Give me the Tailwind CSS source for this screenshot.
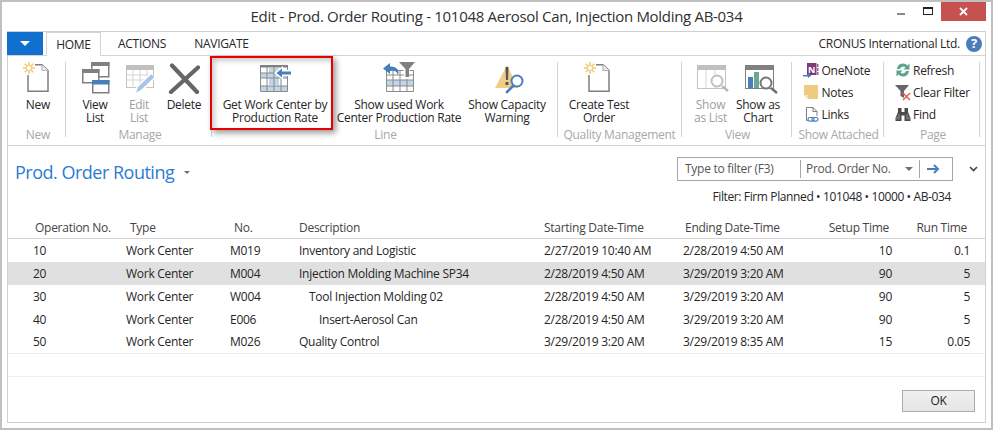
<!DOCTYPE html>
<html lang="en">
<head>
<meta charset="UTF-8">
<title>Edit - Prod. Order Routing</title>
<script src="https://cdn.jsdelivr.net/npm/@tailwindcss/browser@4"></script>
</head>
<body class="bg-white">
<svg class="hidden" width="0" height="0">
  <symbol id="new-doc" viewBox="0 0 32 32">
    <path d="M6 13V29.25H26V8.5L20 2.75H13" fill="none" stroke="#7f7f7f" stroke-width="1.5"/>
    <path d="M20 2.75V8.5H26" fill="#eee" stroke="#b5b5b5" stroke-width="1.2"/>
    <path d="M7 0V12M1 6H13M2.7 1.7L11.3 10.3M11.3 1.7L2.7 10.3" stroke="#f4c875" stroke-width="1.6"/>
    <circle cx="7" cy="6" r="2.6" fill="#fff" stroke="#f4c875"/>
  </symbol>
</svg>
<div class="w-[993px] h-[430px] overflow-hidden font-['Open_Sans',sans-serif] text-[12px] tracking-[-0.27px] text-[#262626] flex flex-col border-2 border-[#c0c0c0] bg-white">
  <!-- title bar -->
  <div class="h-[29px] relative flex items-center justify-center text-[15px] tracking-[-0.3px] text-[#303030] shrink-0">
    <span>Edit - Prod. Order Routing - 101048 Aerosol Can, Injection Molding AB-034</span>
    <div class="absolute right-[5px] top-0 flex items-start">
      <div class="w-[8px] h-[2px] bg-[#8a8a8a] mt-[11px] mr-[18px]"></div>
      <div class="w-[10px] h-[8px] border border-t-2 border-[#222] mt-[5px] mr-[8px]"></div>
      <div class="w-[45px] h-[19px] bg-[#c75050] flex items-center justify-center">
        <svg width="9" height="9" viewBox="0 0 9 9"><path d="M1 1L8 8M8 1L1 8" stroke="#fff" stroke-width="1.8"/></svg>
      </div>
    </div>
  </div>

  <div class="flex-1 mx-[5px] mb-[5px] border border-[#d0d0d0] flex flex-col">
    <!-- tabs -->
    <div class="h-[24px] shrink-0 border-b border-[#d4d4d4] flex items-end relative">
      <div class="w-[36px] h-[23px] bg-[#1170cd] flex items-center justify-center self-start -ml-px">
        <div class="w-0 h-0 border-x-[5px] border-x-transparent border-t-[5px] border-t-white"></div>
      </div>
      <div class="ml-[3px] w-[55px] h-[24px] -mb-px pt-px bg-white border border-b-0 border-[#d4d4d4] flex items-center justify-center">HOME</div>
      <div class="ml-[17px] h-[23px] pt-px flex items-center">ACTIONS</div>
      <div class="ml-[28px] h-[23px] pt-px flex items-center">NAVIGATE</div>
      <div class="ml-auto h-[23px] flex items-center mr-[3px] gap-[6px]">
        <span class="pt-px">CRONUS International Ltd.</span>
        <div class="w-[16px] h-[16px] rounded-full bg-[#4a7ebb] text-white text-[13px] font-bold flex items-center justify-center">?</div>
      </div>
    </div>

    <!-- ribbon -->
    <div class="h-[90px] shrink-0 border-b border-[#d4d4d4] flex items-start leading-[13px] text-center">
      <!-- New -->
      <div class="mt-[6px] w-[58px] h-[75px] border-r border-[#d4d4d4] flex flex-col">
        <div class="h-[66px] shrink-0 pl-[3px]">
          <div class="w-[54px] flex flex-col items-center">
            <svg class="w-[32px] h-[32px] mb-[4px]"><use href="#new-doc"/></svg>
            <span>New</span>
          </div>
        </div>
        <div class="h-[14px] shrink-0 text-[#a8a8a8] pl-[3px]">New</div>
      </div>
      <!-- Manage -->
      <div class="mt-[6px] w-[146px] h-[75px] border-r border-[#d4d4d4] flex flex-col">
        <div class="h-[66px] shrink-0 pl-[7px] flex items-start">
          <div class="w-[44px] flex flex-col items-center">
            <svg class="w-[32px] h-[32px] mb-[4px]" viewBox="0 0 32 32">
              <rect x="12.75" y="0.75" width="17" height="14" fill="#fff" stroke="#808080" stroke-width="1.5"/><rect x="12" y="0" width="18.5" height="4" fill="#808080"/>
              <rect x="3.75" y="7.75" width="16" height="13" fill="#fff" stroke="#808080" stroke-width="1.5"/><rect x="3" y="7" width="17.5" height="4" fill="#808080"/>
              <rect x="13.75" y="18.75" width="16" height="12" fill="#fff" stroke="#808080" stroke-width="1.5"/><rect x="13" y="18" width="17.5" height="4.5" fill="#4a7ebb"/>
            </svg>
            <span>View<br>List</span>
          </div>
          <div class="w-[44px] flex flex-col items-center text-[#a0a0a0]">
            <svg class="w-[32px] h-[32px] mb-[4px]" viewBox="0 0 32 32">
              <rect x="3.5" y="3.5" width="27" height="22" fill="#fff" stroke="#c4c4c4"/><rect x="3" y="3" width="28" height="5" fill="#c0c0c0"/>
              <path d="M3 13H31M3 18H31M10 8V26M17 8V26M24 8V26" stroke="#d4d4d4"/>
              <path d="M14 30L29 14" stroke="#fff" stroke-width="7"/>
              <path d="M13 30.500L15 25L28 12.500L31 15.500L18 28Z" fill="#a8c4e4"/>
            </svg>
            <span>Edit<br>List</span>
          </div>
          <div class="w-[46px] flex flex-col items-center">
            <svg class="w-[32px] h-[32px] mb-[4px]" viewBox="0 0 32 32">
              <path d="M4 3.500L29 30M30 5.500L3 30" stroke="#666" stroke-width="4.2" stroke-linecap="round"/>
            </svg>
            <span>Delete</span>
          </div>
        </div>
        <div class="h-[14px] shrink-0 text-[#a8a8a8] pl-[3px]">Manage</div>
      </div>
      <!-- Line -->
      <div class="mt-[6px] w-[346px] h-[75px] border-r border-[#d4d4d4] flex flex-col relative">
        <div class="h-[66px] shrink-0 pl-[8px] flex items-start relative">
          <div class="w-[110px] flex flex-col items-center">
            <svg class="w-[34px] h-[32px] mb-[4px]" viewBox="0 0 34 32">
              <rect x="2" y="4" width="28" height="25" fill="#fff"/>
              <path d="M2 11H30V16H2ZM2 24H30V29H2Z" fill="#c0d4ea"/><rect x="11" y="6" width="10" height="17" fill="#c0d4ea"/>
              <path d="M2.500 3.500H29.500V29.500H2.500ZM2 11H30M2 16H30M2 24H30M9 5V29M16 5V29M23 5V29" fill="none" stroke="#8a8a8a"/>
              <path d="M2 3H30V5.500H2Z" fill="#808080"/>
              <path d="M33 8H25V4L16 11L25 18V14H33Z" fill="#fff"/>
              <path d="M33 9.500H24V6.500L18.500 11L24 15.500V12.500H33Z" fill="#4a7ebb"/>
            </svg>
            <span>Get Work Center by<br>Production Rate</span>
          </div>
          <div class="ml-[5px] w-[128px] flex flex-col items-center">
            <svg class="w-[34px] h-[32px] mb-[4px]" viewBox="0 0 34 32">
              <rect x="4" y="8" width="28" height="21" fill="#fff"/><rect x="4" y="18" width="28" height="6" fill="#c0d4ea"/>
              <path d="M4.500 8.500H31.500V29.500H4.500ZM4 13H32M4 18H32M4 24H32M11 9V29M18 9V29M25 9V29" fill="none" stroke="#8a8a8a"/>
              <path d="M15 0H34V2L27 9V17H22V9L15 2Z" fill="#fff"/>
              <path d="M17 0H33L27 7V15L23.500 15V7Z" fill="#808080"/>
              <path d="M8 1L1 6.500L8 12V8.500C12 8 15 9 16 13C18 8 14 4 8 4.500Z" fill="#4a7ebb"/>
            </svg>
            <span>Show used Work<br>Center Production Rate</span>
          </div>
          <div class="w-[88px] flex flex-col items-center">
            <svg class="w-[40px] h-[32px] mb-[4px]" viewBox="0 0 40 32">
              <path d="M8 26L20 3L31 26Z" fill="#f0cd88"/>
              <path d="M18.500 5H21.500L21 18H19Z" fill="#555"/><rect x="18.500" y="20" width="3" height="3" fill="#555"/>
              <path d="M26 24L20 30" stroke="#4a7ebb" stroke-width="2.6" stroke-linecap="round"/>
              <circle cx="30" cy="19" r="5.500" fill="#fff" stroke="#4a7ebb" stroke-width="2"/>
            </svg>
            <span>Show Capacity<br>Warning</span>
          </div>
        </div>
        <div class="h-[14px] shrink-0 text-[#a8a8a8] pl-[2px]">Line</div>
        <!-- red callout drawn over the screenshot -->
        <div class="absolute left-[-2px] top-[-6px] w-[123px] h-[74px] border-2 border-[#e60000] shadow-[3px_3px_6px_rgba(0,0,0,0.4),inset_3px_3px_5px_rgba(0,0,0,0.2)]"></div>
      </div>
      <!-- Quality Management -->
      <div class="mt-[6px] w-[124px] h-[75px] border-r border-[#d4d4d4] flex flex-col">
        <div class="h-[66px] shrink-0 pl-[2px]">
          <div class="w-[78px] flex flex-col items-center">
            <svg class="w-[32px] h-[32px] mb-[4px]"><use href="#new-doc"/></svg>
            <span>Create Test<br>Order</span>
          </div>
        </div>
        <div class="h-[14px] shrink-0 text-[#a8a8a8] whitespace-nowrap">Quality Management</div>
      </div>
      <!-- View -->
      <div class="mt-[6px] w-[110px] h-[75px] border-r border-[#d4d4d4] flex flex-col">
        <div class="h-[66px] shrink-0 pl-[5px] flex items-start">
          <div class="w-[47px] flex flex-col items-center text-[#a0a0a0]">
            <svg class="w-[32px] h-[32px] mb-[4px] overflow-visible" viewBox="0 0 32 32">
              <rect x="2.500" y="3.500" width="28" height="23" fill="#fff" stroke="#c4c4c4"/><rect x="2" y="3" width="29" height="5" fill="#c0c0c0"/>
              <path d="M11 8V26M20 8V26" stroke="#d4d4d4"/>
              <path d="M27 24L33 29" stroke="#b8b8b8" stroke-width="2.4"/>
              <circle cx="22" cy="19" r="5.500" fill="#fff" stroke="#c0c0c0" stroke-width="2"/>
            </svg>
            <span>Show<br>as List</span>
          </div>
          <div class="w-[48px] flex flex-col items-center">
            <svg class="w-[32px] h-[32px] mb-[4px] overflow-visible" viewBox="0 0 32 32">
              <rect x="3.500" y="3.500" width="28" height="23" fill="#fff" stroke="#808080"/><rect x="3" y="3" width="29" height="5" fill="#808080"/>
              <rect x="6" y="15" width="5" height="11" fill="#4a7ebb"/><rect x="12" y="10" width="5" height="16" fill="#6aa893"/>
              <path d="M29 26L35 31" stroke="#707070" stroke-width="2.4"/>
              <circle cx="24" cy="21" r="5.500" fill="#fff" fill-opacity="0.85" stroke="#777" stroke-width="2"/>
            </svg>
            <span>Show as<br>Chart</span>
          </div>
        </div>
        <div class="h-[14px] shrink-0 text-[#a8a8a8] pl-[2px]">View</div>
      </div>
      <!-- Show Attached -->
      <div class="mt-[6px] w-[92px] h-[75px] border-r border-[#d4d4d4] flex flex-col text-left">
        <div class="h-[66px] shrink-0 pl-[11px] -mt-[3px] mb-[3px] flex flex-col">
          <div class="h-[22px] flex items-center gap-[2.5px]">
            <svg class="w-[16px] h-[16px] shrink-0 overflow-visible" viewBox="0 0 16 16">
              <rect x="4" y="1" width="9.500" height="12" fill="#80397b"/>
              <rect x="14" y="2" width="1.500" height="3" fill="#a45ca0"/><rect x="14" y="6" width="1.500" height="3" fill="#a45ca0"/><rect x="14" y="10" width="1.500" height="3" fill="#a45ca0"/>
              <text x="5" y="10.500" font-size="9" font-weight="700" fill="#fff" font-family="Open Sans">N</text>
              <path d="M0 13H5V11L8.500 13.500L5 16V14.500H0Z" fill="#4a7ebb"/>
            </svg>
            <span>OneNote</span>
          </div>
          <div class="h-[22px] flex items-center gap-[2.5px]">
            <svg class="w-[16px] h-[16px] shrink-0" viewBox="0 0 16 16">
              <path d="M1 1H15V15H5L1 11Z" fill="#f0ca7f"/><path d="M1 11H5V15Z" fill="#f8e3b8"/>
            </svg>
            <span>Notes</span>
          </div>
          <div class="h-[22px] flex items-center gap-[2.5px]">
            <svg class="w-[16px] h-[16px] shrink-0" viewBox="0 0 16 16">
              <path d="M3.500 14.500V1.500H10L14 5.500V10M3.500 14.500H5M10 1.500V5.500H14" fill="none" stroke="#7f7f7f"/>
              <rect x="5" y="11.500" width="6" height="3.600" rx="1.800" fill="none" stroke="#4a7ebb" stroke-width="1.2"/>
              <rect x="9" y="11.500" width="6" height="3.600" rx="1.800" fill="none" stroke="#4a7ebb" stroke-width="1.2"/>
            </svg>
            <span>Links</span>
          </div>
        </div>
        <div class="h-[14px] shrink-0 text-[#a8a8a8] text-center pl-[2px] whitespace-nowrap">Show Attached</div>
      </div>
      <!-- Page -->
      <div class="mt-[6px] w-[96px] h-[75px] border-r border-[#d4d4d4] flex flex-col text-left">
        <div class="h-[66px] shrink-0 pl-[11px] -mt-[3px] mb-[3px] flex flex-col">
          <div class="h-[22px] flex items-center gap-[2px]">
            <svg class="w-[16px] h-[16px] shrink-0" viewBox="0 0 16 16">
              <path d="M2 7A6 6 0 0 1 12.500 3.500L14.500 1.500V7.500H8.500L10.500 5.500A3.400 3.400 0 0 0 5 7Z" fill="#5aa58e"/>
              <path d="M14 9A6 6 0 0 1 3.500 12.500L1.500 14.500V8.500H7.500L5.500 10.500A3.400 3.400 0 0 0 11 9Z" fill="#5aa58e"/>
            </svg>
            <span>Refresh</span>
          </div>
          <div class="h-[22px] flex items-center gap-[2px]">
            <svg class="w-[16px] h-[16px] shrink-0 overflow-visible" viewBox="0 0 16 16">
              <path d="M0 1H14L9 7V14L5.500 12V7Z" fill="#666"/>
              <path d="M8 9L15 16M15 9L8 16" stroke="#e0604a" stroke-width="1.5"/>
            </svg>
            <span>Clear Filter</span>
          </div>
          <div class="h-[22px] flex items-center gap-[2px]">
            <svg class="w-[16px] h-[16px] shrink-0" viewBox="0 0 16 16">
              <path d="M3 2H6.500V6H9.500V2H13V6L15.500 12V15H9.500V9.500H6.500V15H0.500V12L3 6Z" fill="#4a4a4a"/>
              <path d="M2 10.500V13.500M4 8V13.500M12 8V13.500M14 10.500V13.500" stroke="#aaa" stroke-width="0.8"/>
            </svg>
            <span>Find</span>
          </div>
        </div>
        <div class="h-[14px] shrink-0 text-[#a8a8a8] text-center pl-[3px]">Page</div>
      </div>
    </div>

    <!-- page header -->
    <div class="h-[74px] shrink-0 relative">
      <div class="flex items-start">
        <div class="ml-[7px] mt-[13px] flex items-center gap-[10px]">
          <span class="text-[18px] leading-[26px] tracking-[-0.5px] text-[#2b7cd3]">Prod. Order Routing</span>
          <div class="w-0 h-0 border-x-[3px] border-x-transparent border-t-[3px] border-t-[#707070]"></div>
        </div>
        <div class="ml-auto mt-[11px] w-[276px] h-[24px] border border-[#a6a6a6] flex items-center text-[#555]">
          <span class="w-[123px] pl-[7px] h-[18px] leading-[17px] border-r border-[#a6a6a6]">Type to filter (F3)</span>
          <span class="w-[104px] pl-[5px]">Prod. Order No.</span>
          <div class="w-0 h-0 border-x-[4px] border-x-transparent border-t-[4px] border-t-[#707070] mr-[6px]"></div>
          <div class="h-[18px] border-r border-[#a6a6a6]"></div>
          <svg class="ml-[7px]" width="13" height="10" viewBox="0 0 13 10"><path d="M0 5H11M7 1L11 5L7 9" fill="none" stroke="#4a7ebb" stroke-width="2"/></svg>
        </div>
        <svg class="ml-[16px] mr-[7px] mt-[20px]" width="9" height="6" viewBox="0 0 9 6"><path d="M1 1L4.500 4.500L8 1" fill="none" stroke="#444" stroke-width="1.6"/></svg>
      </div>
      <div class="absolute right-[34px] top-[43px] h-[16px] leading-[16px] tracking-[-0.38px]">Filter: Firm Planned • 101048 • 10000 • AB-034</div>
    </div>

    <!-- table -->
    <div class="shrink-0 text-[#444] h-[19px] leading-[16px] border-b border-[#d4d4d4] pl-[25px] grid grid-cols-[95px_103px_68px_245px_141px_115px_89px_78px]">
      <span class="pl-[2px]">Operation No.</span><span class="pl-[2px]">Type</span><span class="pl-[3px]">No.</span><span>Description</span><span>Starting Date-Time</span><span>Ending Date-Time</span><span class="text-right">Setup Time</span><span class="text-right">Run Time</span>
    </div>
    <div class="shrink-0 pl-[25px] h-[23px] items-center grid grid-cols-[93px_104px_69px_245px_139px_117px_92px_78px]">
      <span>10</span><span>Work Center</span><span>M019</span><span>Inventory and Logistic</span><span>2/27/2019 10:40 AM</span><span>2/28/2019 4:50 AM</span><span class="text-right">10</span><span class="text-right">0.1</span>
    </div>
    <div class="shrink-0 pl-[25px] h-[23px] items-center bg-[#e0e0e0] grid grid-cols-[93px_104px_69px_245px_139px_117px_92px_78px]">
      <span>20</span><span>Work Center</span><span>M004</span><span>Injection Molding Machine SP34</span><span>2/28/2019 4:50 AM</span><span>3/29/2019 3:20 AM</span><span class="text-right">90</span><span class="text-right">5</span>
    </div>
    <div class="shrink-0 pl-[25px] h-[23px] items-center grid grid-cols-[93px_104px_69px_245px_139px_117px_92px_78px]">
      <span>30</span><span>Work Center</span><span>W004</span><span class="pl-[10px]">Tool Injection Molding 02</span><span>2/28/2019 4:50 AM</span><span>3/29/2019 3:20 AM</span><span class="text-right">90</span><span class="text-right">5</span>
    </div>
    <div class="shrink-0 pl-[25px] h-[23px] items-center grid grid-cols-[93px_104px_69px_245px_139px_117px_92px_78px]">
      <span>40</span><span>Work Center</span><span>E006</span><span class="pl-[20px]">Insert-Aerosol Can</span><span>2/28/2019 4:50 AM</span><span>3/29/2019 3:20 AM</span><span class="text-right">90</span><span class="text-right">5</span>
    </div>
    <div class="shrink-0 pl-[25px] h-[23px] items-center border-b border-[#ececec] grid grid-cols-[93px_104px_69px_245px_139px_117px_92px_78px]">
      <span>50</span><span>Work Center</span><span>M026</span><span>Quality Control</span><span>3/29/2019 3:20 AM</span><span>3/29/2019 8:35 AM</span><span class="text-right">15</span><span class="text-right">0.05</span>
    </div>
    <div class="shrink-0 h-[23px] border-b border-[#ececec]"></div>

    <!-- footer -->
    <div class="flex justify-end pt-[13px] pr-[10px]">
      <div class="w-[73px] h-[22px] border border-[#acacac] bg-gradient-to-b from-[#f0f0f0] to-[#e5e5e5] flex items-center justify-center text-[#222]">OK</div>
    </div>
  </div>
</div>
</body>
</html>
